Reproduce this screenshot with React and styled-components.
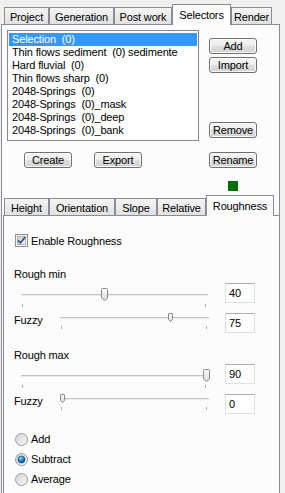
import React from "react";
import styled, { createGlobalStyle } from "styled-components";

const GlobalStyle = createGlobalStyle`
  html, body {
    margin: 0;
    padding: 0;
    background: #f0f0f0;
  }
  body {
    font-family: "Liberation Sans", Arial, sans-serif;
    font-size: 11px;
    letter-spacing: -0.15px;
    color: #000;
  }
`;

const Window = styled.div`
  width: 285px;
  height: 493px;
  overflow: hidden;
  background: #f0f0f0;
  display: flex;
  flex-direction: column;
`;

const TabBar = styled.div`
  display: flex;
  align-items: flex-end;
  height: ${(p) => p.$h}px;
  margin-top: ${(p) => p.$mt || 0}px;
  padding-left: ${(p) => p.$pl}px;
  position: relative;
  z-index: 1;
  flex-shrink: 0;
`;

const Tab = styled.div`
  box-sizing: border-box;
  width: ${(p) => p.$w}px;
  height: ${(p) => (p.$active ? 21 : 17)}px;
  margin-bottom: ${(p) => (p.$active ? -1 : 0)}px;
  border: 1px solid #898c95;
  border-bottom: none;
  background: ${(p) =>
    p.$active ? "#fcfcfc" : "linear-gradient(#f4f4f4, #e1e1e1)"};
  display: flex;
  align-items: center;
  justify-content: center;
  white-space: nowrap;
  padding-top: ${(p) => (p.$active ? 0 : 1)}px;
`;

const Pane = styled.div`
  box-sizing: border-box;
  border: 1px solid #898c95;
  background: #fcfcfc;
  display: flex;
  flex-direction: column;
  flex-shrink: 0;
`;

const OuterPane = styled(Pane)`
  width: 279px;
  height: 520px;
  margin-left: 1px;
`;

const InnerPane = styled(Pane)`
  flex: 1;
  margin: 0 -1px 0 1px;
  padding: 0 24px 0 10px;
`;

const SelectorArea = styled.div`
  display: flex;
  gap: 10px;
  padding: 5px 0 0 5px;
`;

const LeftColumn = styled.div`
  display: flex;
  flex-direction: column;
`;

const ListBox = styled.div`
  box-sizing: border-box;
  width: 192px;
  height: 111px;
  border: 1px solid #828790;
  background: #fff;
  padding: 2px 1px;
`;

const ListItem = styled.div`
  height: 13px;
  line-height: 13px;
  padding-left: 3px;
  white-space: pre;
  background: ${(p) => (p.$selected ? "#3399ff" : "transparent")};
  color: ${(p) => (p.$selected ? "#fff" : "#000")};
`;

const ButtonRow = styled.div`
  display: flex;
  gap: 22px;
  margin-top: 11px;
  padding-left: 17px;
`;

const RightColumn = styled.div`
  display: flex;
  flex-direction: column;
  width: 48px;
  padding-top: 8px;
`;

const Button = styled.div`
  box-sizing: border-box;
  width: 48px;
  height: 16px;
  margin-top: ${(p) => p.$mt || 0}px;
  border: 1px solid #707070;
  border-radius: 3px;
  background: linear-gradient(#f6f6f6 0%, #ececec 50%, #dedede 52%, #d2d2d2 100%);
  box-shadow: inset 0 0 0 1px #fafafa;
  display: flex;
  align-items: center;
  justify-content: center;
  line-height: 14px;
`;

const StatusSquare = styled.div`
  width: 10px;
  height: 10px;
  margin-top: 13px;
  align-self: center;
  background: #006f00;
`;

const CheckRow = styled.label`
  display: flex;
  align-items: center;
  gap: 3px;
  height: 13px;
  margin-top: 18px;
  padding-left: 1px;
`;

const SectionLabel = styled.div`
  height: 13px;
  line-height: 13px;
  margin-top: ${(p) => p.$mt}px;
`;

const SliderRow = styled.div`
  display: flex;
  align-items: flex-start;
  height: 20px;
  margin-top: ${(p) => p.$mt}px;
`;

const RowLabel = styled.div`
  width: 46px;
  line-height: 13px;
  margin-top: 1px;
`;

const SliderBody = styled.div`
  position: relative;
  width: ${(p) => p.$w}px;
  height: 20px;
  margin-left: ${(p) => p.$ml || 0}px;
`;

const Track = styled.div`
  position: absolute;
  left: 0;
  right: 0;
  top: ${(p) => p.$top}px;
  height: 1px;
  background: #c3c3c3;
  border-bottom: 1px solid #ececec;
`;

const Tick = styled.div`
  position: absolute;
  top: ${(p) => p.$top}px;
  width: 1px;
  height: 3px;
  background: #a8a8a8;
`;

const Thumb = styled.svg`
  position: absolute;
  top: ${(p) => p.$top}px;
  display: block;
`;

const NumberBox = styled.div`
  box-sizing: border-box;
  width: 30px;
  height: 20px;
  margin-left: auto;
  border: 1px solid #dbdfe6;
  border-top-color: #abadb3;
  background: #fff;
  padding-left: 3px;
  line-height: 18px;
`;

const RadioGroup = styled.div`
  display: flex;
  flex-direction: column;
  margin-top: 15px;
`;

const RadioRow = styled.label`
  display: flex;
  align-items: center;
  gap: 3px;
  height: 20px;
  padding-left: 1px;
`;

const outerTabs = [
  { label: "Project", w: 45 },
  { label: "Generation", w: 65 },
  { label: "Post work", w: 58 },
  { label: "Selectors", w: 59, active: true },
  { label: "Render", w: 41 },
];

const innerTabs = [
  { label: "Height", w: 45 },
  { label: "Orientation", w: 66 },
  { label: "Slope", w: 42 },
  { label: "Relative", w: 49 },
  { label: "Roughness", w: 68, active: true },
];

const selectors = [
  "Selection  (0)",
  "Thin flows sediment  (0) sedimente",
  "Hard fluvial  (0)",
  "Thin flows sharp  (0)",
  "2048-Springs  (0)",
  "2048-Springs  (0)_mask",
  "2048-Springs  (0)_deep",
  "2048-Springs  (0)_bank",
];

function CheckBox() {
  return (
    <svg width="13" height="13" viewBox="0 0 13 13">
      <defs>
        <linearGradient id="cbg" x1="0" y1="0" x2="1" y2="1">
          <stop offset="0" stopColor="#cfcfcf" />
          <stop offset="1" stopColor="#fbfbfb" />
        </linearGradient>
      </defs>
      <rect x="0.5" y="0.5" width="12" height="12" fill="#f4f4f4" stroke="#8e8f8f" />
      <rect x="2.5" y="2.5" width="8" height="8" fill="url(#cbg)" stroke="#b4b4b4" />
      <path d="M3 6.3 L5.4 8.8 L10.2 3.2" fill="none" stroke="#3f568a" strokeWidth="1.8" />
    </svg>
  );
}

function Radio({ checked }) {
  return (
    <svg width="13" height="13" viewBox="0 0 13 13">
      <defs>
        <linearGradient id="rbg" x1="0" y1="0" x2="1" y2="1">
          <stop offset="0" stopColor="#d2d2d2" />
          <stop offset="1" stopColor="#fafafa" />
        </linearGradient>
        <radialGradient id="rdot" cx="0.4" cy="0.35" r="0.7">
          <stop offset="0" stopColor="#a6e1fb" />
          <stop offset="0.45" stopColor="#2b86cf" />
          <stop offset="1" stopColor="#0b3f73" />
        </radialGradient>
      </defs>
      <circle cx="6.5" cy="6.5" r="6" fill="url(#rbg)" stroke="#9a9a9a" />
      {checked && <circle cx="6.5" cy="6.5" r="3.6" fill="url(#rdot)" stroke="#1c4a78" strokeWidth="0.6" />}
    </svg>
  );
}

function ThumbShape({ small }) {
  const w = small ? 5 : 7;
  const h = small ? 9 : 13;
  const d = small
    ? "M0.5 1 Q0.5 0.5 1 0.5 H4 Q4.5 0.5 4.5 1 V6.5 L2.5 8.5 L0.5 6.5 Z"
    : "M0.5 1.5 Q0.5 0.5 1.5 0.5 H5.5 Q6.5 0.5 6.5 1.5 V10 L3.5 12.5 L0.5 10 Z";
  return (
    <>
      <defs>
        <linearGradient id="thg" x1="0" y1="0" x2="0" y2="1">
          <stop offset="0" stopColor="#fdfdfd" />
          <stop offset="1" stopColor="#d8d8d8" />
        </linearGradient>
      </defs>
      <path d={d} fill="url(#thg)" stroke="#8b8b8b" />
      <rect x="0" y="0" width={w} height={h} fill="none" />
    </>
  );
}

function Slider({ width, ml, frac, small }) {
  const thumbW = small ? 5 : 7;
  const inset = 2;
  const center = inset + frac * (width - 2 * inset);
  const trackTop = small ? 4 : 11;
  return (
    <SliderBody $w={width} $ml={ml}>
      <Track $top={trackTop} />
      <Tick $top={small ? 13 : 21} style={{ left: 1 }} />
      <Tick $top={small ? 13 : 21} style={{ left: width - 3 }} />
      <Thumb
        $top={small ? 0 : 5}
        width={thumbW}
        height={small ? 9 : 13}
        viewBox={`0 0 ${thumbW} ${small ? 9 : 13}`}
        style={{ left: Math.round(center - thumbW / 2) }}
      >
        <ThumbShape small={small} />
      </Thumb>
    </SliderBody>
  );
}

function RangeBlock({ title, mt, value, fuzzy, max }) {
  return (
    <>
      <SectionLabel $mt={mt}>{title}</SectionLabel>
      <SliderRow $mt={2}>
        <Slider width={187} ml={7} frac={value / max} />
        <NumberBox>{value}</NumberBox>
      </SliderRow>
      <SliderRow $mt={10}>
        <RowLabel>Fuzzy</RowLabel>
        <Slider width={149} frac={fuzzy / 100} small />
        <NumberBox>{fuzzy}</NumberBox>
      </SliderRow>
    </>
  );
}

export default function App() {
  return (
    <Window>
      <GlobalStyle />
      <TabBar $h={24} $pl={4}>
        {outerTabs.map((t) => (
          <Tab key={t.label} $w={t.w} $active={t.active}>
            {t.label}
          </Tab>
        ))}
      </TabBar>
      <OuterPane>
        <SelectorArea>
          <LeftColumn>
            <ListBox>
              {selectors.map((s, i) => (
                <ListItem key={s} $selected={i === 0}>
                  {s}
                </ListItem>
              ))}
            </ListBox>
            <ButtonRow>
              <Button>Create</Button>
              <Button>Export</Button>
            </ButtonRow>
          </LeftColumn>
          <RightColumn>
            <Button>Add</Button>
            <Button $mt={3}>Import</Button>
            <Button $mt={49}>Remove</Button>
            <Button $mt={14}>Rename</Button>
            <StatusSquare />
          </RightColumn>
        </SelectorArea>
        <TabBar $h={20} $mt={4} $pl={2}>
          {innerTabs.map((t) => (
            <Tab key={t.label} $w={t.w} $active={t.active}>
              {t.label}
            </Tab>
          ))}
        </TabBar>
        <InnerPane>
          <CheckRow>
            <CheckBox />
            <span>Enable Roughness</span>
          </CheckRow>
          <RangeBlock title="Rough min" mt={21} value={40} fuzzy={75} max={90} />
          <RangeBlock title="Rough max" mt={16} value={90} fuzzy={0} max={90} />
          <RadioGroup>
            <RadioRow>
              <Radio />
              <span>Add</span>
            </RadioRow>
            <RadioRow>
              <Radio checked />
              <span>Subtract</span>
            </RadioRow>
            <RadioRow>
              <Radio />
              <span>Average</span>
            </RadioRow>
          </RadioGroup>
        </InnerPane>
      </OuterPane>
    </Window>
  );
}
